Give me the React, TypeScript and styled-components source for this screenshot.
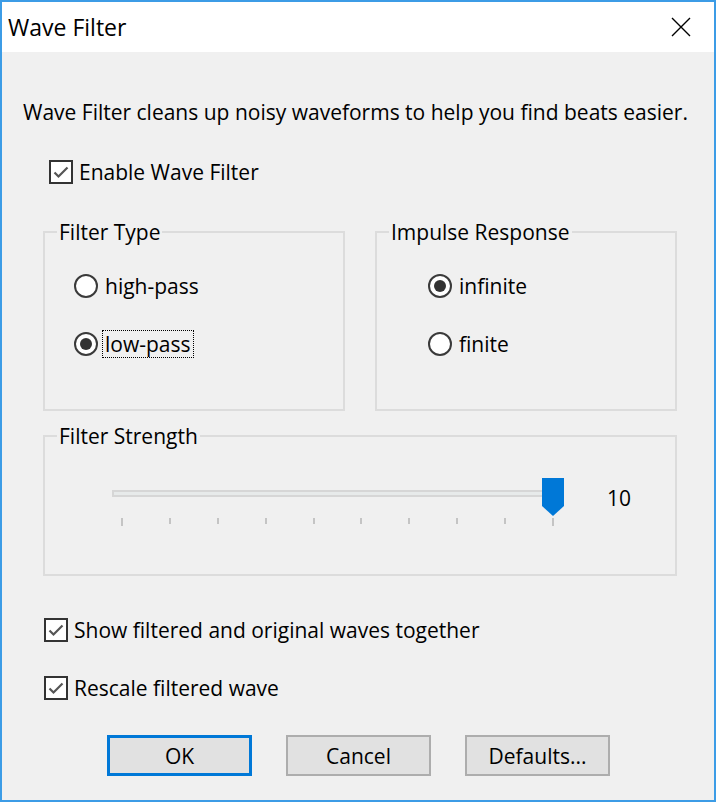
import React from "react";
import styled, { createGlobalStyle } from "styled-components";

const GlobalStyle = createGlobalStyle`
  html, body { margin: 0; padding: 0; background: #f0f0f0; }
  body { font-family: "Segoe UI", "Open Sans", "Noto Sans", sans-serif; }
  * { box-sizing: border-box; }
`;

const Window = styled.div`
  width: 716px;
  height: 802px;
  border: 2px solid #3c9ce6;
  background: #f0f0f0;
  display: flex;
  flex-direction: column;
  color: #000;
  font-size: 21px;
`;

const TitleBar = styled.div`
  height: 50px;
  flex-shrink: 0;
  background: #fff;
  display: flex;
  align-items: center;
  justify-content: space-between;
  padding: 0 23px 0 6px;
`;

const Title = styled.span`
  font-size: 23px;
  line-height: 26px;
`;

const CloseIcon = styled.svg`
  width: 20px;
  height: 20px;
  display: block;
`;

const Content = styled.div`
  display: flex;
  flex-direction: column;
  align-items: flex-start;
  padding: 0 37px 0 21px;
`;

const Description = styled.p`
  margin: 48px 0 0;
  line-height: 24px;
  white-space: nowrap;
`;

const CheckRow = styled.label<{ $mt: number; $ml: number }>`
  display: flex;
  align-items: center;
  gap: 6px;
  height: 24px;
  line-height: 24px;
  margin-top: ${(p) => p.$mt}px;
  margin-left: ${(p) => p.$ml}px;
  white-space: nowrap;
`;

const CheckBox = styled.span`
  width: 24px;
  height: 24px;
  border: 2px solid #333;
  background: #fff;
  display: flex;
  align-items: center;
  justify-content: center;
  flex-shrink: 0;
`;

const GroupRow = styled.div`
  align-self: stretch;
  display: grid;
  grid-template-columns: 1fr 1fr;
  column-gap: 30px;
  margin-top: 36px;
  margin-left: 20px;
`;

const Group = styled.fieldset<{ $h: number; $mt?: number; $ml?: number }>`
  margin: ${(p) => p.$mt ?? 0}px 0 0 ${(p) => p.$ml ?? 0}px;
  padding: 0;
  min-width: 0;
  border: 2px solid #dcdcdc;
  height: ${(p) => p.$h}px;
  align-self: stretch;
`;

const Legend = styled.legend`
  margin-left: 12px;
  padding: 0 2px;
  line-height: 24px;
  font-size: 21px;
`;

const RadioList = styled.div<{ $pl: number }>`
  display: flex;
  flex-direction: column;
  gap: 34px;
  padding: 30px 0 0 ${(p) => p.$pl}px;
`;

const RadioRow = styled.label`
  display: flex;
  align-items: center;
  gap: 4px;
  height: 24px;
`;

const RadioCircle = styled.span<{ $checked: boolean }>`
  width: 24px;
  height: 24px;
  border-radius: 50%;
  border: 2px solid #3a3a3a;
  background: #fff;
  display: flex;
  align-items: center;
  justify-content: center;
  flex-shrink: 0;
  &::after {
    content: "";
    width: 12px;
    height: 12px;
    border-radius: 50%;
    background: ${(p) => (p.$checked ? "#333" : "transparent")};
  }
`;

const RadioText = styled.span<{ $focus?: boolean }>`
  padding: 0 2px;
  line-height: 26px;
  border: 1px dotted ${(p) => (p.$focus ? "#000" : "transparent")};
`;

const SliderRow = styled.div`
  display: flex;
  align-items: flex-start;
  gap: 43px;
  padding: 30px 0 0 67px;
`;

const Slider = styled.div`
  position: relative;
  width: 452px;
  height: 48px;
  flex-shrink: 0;
`;

const Track = styled.div`
  position: absolute;
  left: 0;
  right: 0;
  top: 12px;
  height: 7px;
  border: 2px solid #d6d6d6;
  background: #e7eaea;
`;

const Thumb = styled.svg`
  position: absolute;
  top: 0;
  width: 22px;
  height: 38px;
`;

const Tick = styled.span<{ $long: boolean }>`
  position: absolute;
  top: 40px;
  width: 2px;
  height: ${(p) => (p.$long ? 8 : 6)}px;
  background: #c4c4c4;
`;

const SliderValue = styled.span`
  margin-top: 8px;
  line-height: 24px;
`;

const ButtonRow = styled.div`
  display: flex;
  gap: 34px;
  margin-top: 35px;
  margin-left: 84px;
`;

const Button = styled.button<{ $default?: boolean }>`
  width: 145px;
  height: 41px;
  background: #e1e1e1;
  border: ${(p) => (p.$default ? "3px solid #0078d7" : "2px solid #adadad")};
  font-family: inherit;
  font-size: 21px;
  color: #000;
  padding: 0;
  border-radius: 0;
`;

const Check = () => (
  <svg width="18" height="18" viewBox="0 0 18 18">
    <polyline points="2.5,9.5 6.5,13.5 15.5,4.5" fill="none" stroke="#555" strokeWidth="2.2" />
  </svg>
);

const CheckItem = ({ label, mt, ml }: { label: string; mt: number; ml: number }) => (
  <CheckRow $mt={mt} $ml={ml}>
    <CheckBox>
      <Check />
    </CheckBox>
    {label}
  </CheckRow>
);

const Radio = ({ label, checked, focus }: { label: string; checked: boolean; focus?: boolean }) => (
  <RadioRow>
    <RadioCircle $checked={checked} />
    <RadioText $focus={focus}>{label}</RadioText>
  </RadioRow>
);

const TICK_COUNT = 10;
const TICK_START = 10;
const TICK_SPAN = 431;
const value = 10;

export default function App() {
  const tickX = (i: number) => TICK_START + (i * TICK_SPAN) / (TICK_COUNT - 1);
  const thumbCenter = tickX(value - 1);
  return (
    <>
      <GlobalStyle />
      <Window>
        <TitleBar>
          <Title>Wave Filter</Title>
          <CloseIcon viewBox="0 0 20 20">
            <path d="M1 1 L19 19 M19 1 L1 19" stroke="#000" strokeWidth="1.4" fill="none" />
          </CloseIcon>
        </TitleBar>
        <Content>
          <Description>Wave Filter cleans up noisy waveforms to help you find beats easier.</Description>
          <CheckItem label="Enable Wave Filter" mt={36} ml={26} />
          <GroupRow>
            <Group $h={191}>
              <Legend>Filter Type</Legend>
              <RadioList $pl={29}>
                <Radio label="high-pass" checked={false} />
                <Radio label="low-pass" checked focus />
              </RadioList>
            </Group>
            <Group $h={191}>
              <Legend>Impulse Response</Legend>
              <RadioList $pl={51}>
                <Radio label="infinite" checked />
                <Radio label="finite" checked={false} />
              </RadioList>
            </Group>
          </GroupRow>
          <Group $h={152} $mt={13} $ml={20}>
            <Legend>Filter Strength</Legend>
            <SliderRow>
              <Slider>
                <Track />
                {Array.from({ length: TICK_COUNT }, (_, i) => (
                  <Tick
                    key={i}
                    $long={i === 0 || i === TICK_COUNT - 1}
                    style={{ left: tickX(i) - 1 }}
                  />
                ))}
                <Thumb viewBox="0 0 22 38" style={{ left: thumbCenter - 11 }}>
                  <path d="M0 0 H22 V28 L11 38 L0 28 Z" fill="#0078d7" />
                </Thumb>
              </Slider>
              <SliderValue>{value}</SliderValue>
            </SliderRow>
          </Group>
          <CheckItem label="Show filtered and original waves together" mt={42} ml={21} />
          <CheckItem label="Rescale filtered wave" mt={34} ml={21} />
          <ButtonRow>
            <Button $default>OK</Button>
            <Button>Cancel</Button>
            <Button>Defaults...</Button>
          </ButtonRow>
        </Content>
      </Window>
    </>
  );
}
